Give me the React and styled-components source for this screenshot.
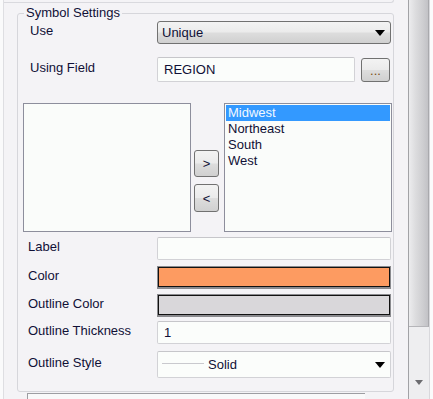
import React from 'react';
import styled, { createGlobalStyle } from 'styled-components';

const GlobalStyle = createGlobalStyle`
  html, body {
    margin: 0;
    padding: 0;
    background: #f4f3f6;
  }
  body {
    font-family: "Liberation Sans", Arial, sans-serif;
    font-size: 13px;
    color: #101036;
  }
`;

const buttonFace = `linear-gradient(#f3f3f3 0%, #ebebeb 48%, #dddddd 52%, #d0d0d0 100%)`;

const Frame = styled.div`
  display: flex;
  width: 433px;
  height: 399px;
  overflow: hidden;
`;

const Main = styled.div`
  flex: 0 0 408px;
  display: flex;
  background: #fafafb;
`;

const Panel = styled.div`
  flex: 1;
  margin-left: 3px;
  border-left: 1px solid #dedee2;
  background: #f4f3f6;
  display: flex;
  flex-direction: column;
`;

const TopStub = styled.div`
  height: 2px;
  margin-right: 14px;
  border-bottom: 1px solid #d9d9de;
  border-right: 1px solid #d9d9de;
  border-bottom-right-radius: 3px;
`;

const GroupArea = styled.div`
  padding: 0 14px 0 13px;
`;

const Group = styled.fieldset`
  margin: 2px 0 0;
  padding: 0 0 13px;
  border: 1px solid #d6d6db;
  border-radius: 3px;
  min-width: 0;
`;

const Legend = styled.legend`
  margin-left: 6px;
  padding: 0 2px;
  line-height: 16px;
  font-size: 13px;
  color: #101036;
`;

const Row = styled.div`
  display: grid;
  grid-template-columns: 139px 234px;
  align-items: center;
  height: ${p => p.$h}px;
  margin-top: ${p => p.$gap || 0}px;
`;

const FieldLabel = styled.span`
  padding-left: ${p => p.$indent}px;
  margin-top: -4px;
  white-space: nowrap;
`;

const Select = styled.div`
  height: 100%;
  box-sizing: border-box;
  display: flex;
  align-items: center;
  justify-content: space-between;
  padding: 0 5px 0 4px;
  border: 1px solid #717171;
  border-radius: 3px;
  background: ${buttonFace};
`;

const Arrow = () => (
  <svg width="10" height="6" viewBox="0 0 10 6">
    <polygon points="0,0 10,0 5,6" fill="#000" />
  </svg>
);

const TextBox = styled.div`
  height: 100%;
  box-sizing: border-box;
  display: flex;
  align-items: center;
  padding-left: ${p => p.$pad || 6}px;
  background: #fbfdfb;
  border: 1px solid #d2d2d6;
  border-top-color: #c6c6ca;
  border-radius: 2px;
  flex: 1;
`;

const FieldPick = styled.div`
  display: flex;
  gap: 6px;
  height: 100%;
  margin-right: 1px;
`;

const SmallButton = styled.button`
  width: ${p => p.$w}px;
  height: ${p => p.$h}px;
  align-self: ${p => p.$align || 'center'};
  padding: 0;
  border: 1px solid #717171;
  border-radius: 3px;
  background: ${buttonFace};
  font-family: inherit;
  font-size: 13px;
  color: ${p => p.$ink || '#101036'};
  line-height: 1;
`;

const ListRow = styled.div`
  display: flex;
  height: 129px;
  margin-top: 21px;
  padding-left: 5px;
`;

const ListBox = styled.div`
  width: 168px;
  box-sizing: border-box;
  background: #fafcfa;
  border: 1px solid #8d8e9c;
  padding: 1px;
`;

const ListItem = styled.div`
  height: 16px;
  line-height: 16px;
  padding-left: 2px;
  background: ${p => (p.$selected ? '#3399ff' : 'transparent')};
  color: ${p => (p.$selected ? '#f2f8ff' : '#101036')};
`;

const MoveColumn = styled.div`
  display: flex;
  flex-direction: column;
  gap: 7px;
  margin: 47px 5px 0 3px;
`;

const Swatch = styled.div`
  height: 100%;
  box-sizing: border-box;
  border: 1px solid #8a8a8e;
  border-bottom-width: 2px;
  box-shadow: inset 0 0 0 1px #111;
  background: ${p => p.$color};
`;

const StyleBox = styled(TextBox)`
  justify-content: flex-start;
  padding: 0 5px 0 4px;
  flex: none;
`;

const LineSample = styled.span`
  width: 42px;
  height: 1px;
  background: #c9c9ce;
  margin: -2px 4px 0 0;
`;

const StyleName = styled.span`
  flex: 1;
`;

const BottomBox = styled.div`
  flex: 1;
  margin: 1px 0 0 23px;
  width: 337px;
  border-top: 1px solid #9d9da2;
  border-left: 1px solid #9d9da2;
  background: #f9f9fa;
`;

const Scrollbar = styled.div`
  flex: 0 0 25px;
  display: flex;
  background: #fbfbfb;
`;

const Track = styled.div`
  width: 20px;
  border-left: 1px solid #a2a2a6;
  border-right: 1px solid #d8d8dc;
  background: #eeeef0;
  display: flex;
  flex-direction: column;
`;

const Thumb = styled.div`
  height: 326px;
  border-bottom: 1px solid #b5b5b9;
  border-right: 1px solid #a9a9ad;
  background: linear-gradient(to right, #ececee 0%, #dcdcde 35%, #cfcfd2 70%, #c2c2c6 100%);
`;

const TrackRest = styled.div`
  flex: 1;
  display: flex;
  align-items: flex-end;
  justify-content: center;
  padding-bottom: 14px;
`;

const DownArrow = () => (
  <svg width="8" height="5" viewBox="0 0 8 5">
    <polygon points="0,0 8,0 4,5" fill="#6c6c70" />
  </svg>
);

const regions = ['Midwest', 'Northeast', 'South', 'West'];

export default function App() {
  return (
    <>
      <GlobalStyle />
      <Frame>
        <Main>
          <Panel>
            <TopStub />
            <GroupArea>
              <Group>
                <Legend>Symbol Settings</Legend>

                <Row $h={23}>
                  <FieldLabel $indent={12}>Use</FieldLabel>
                  <Select>
                    <span>Unique</span>
                    <Arrow />
                  </Select>
                </Row>

                <Row $h={25} $gap={13}>
                  <FieldLabel $indent={12}>Using Field</FieldLabel>
                  <FieldPick>
                    <TextBox $pad={6}>REGION</TextBox>
                    <SmallButton $w={29} $h={24} $align="flex-end" $ink="#7a4d12">...</SmallButton>
                  </FieldPick>
                </Row>

                <ListRow>
                  <ListBox />
                  <MoveColumn>
                    <SmallButton $w={25} $h={27}>&gt;</SmallButton>
                    <SmallButton $w={25} $h={28}>&lt;</SmallButton>
                  </MoveColumn>
                  <ListBox>
                    {regions.map((r, i) => (
                      <ListItem key={r} $selected={i === 0}>{r}</ListItem>
                    ))}
                  </ListBox>
                </ListRow>

                <Row $h={23} $gap={5}>
                  <FieldLabel $indent={10}>Label</FieldLabel>
                  <TextBox />
                </Row>

                <Row $h={23} $gap={6}>
                  <FieldLabel $indent={10}>Color</FieldLabel>
                  <Swatch $color="#fd9b61" />
                </Row>

                <Row $h={23} $gap={5}>
                  <FieldLabel $indent={10}>Outline Color</FieldLabel>
                  <Swatch $color="#d9d7da" />
                </Row>

                <Row $h={23} $gap={4}>
                  <FieldLabel $indent={10}>Outline Thickness</FieldLabel>
                  <TextBox>1</TextBox>
                </Row>

                <Row $h={27} $gap={7}>
                  <FieldLabel $indent={10}>Outline Style</FieldLabel>
                  <StyleBox>
                    <LineSample />
                    <StyleName>Solid</StyleName>
                    <Arrow />
                  </StyleBox>
                </Row>
              </Group>
            </GroupArea>
            <BottomBox />
          </Panel>
        </Main>
        <Scrollbar>
          <Track>
            <Thumb />
            <TrackRest>
              <DownArrow />
            </TrackRest>
          </Track>
        </Scrollbar>
      </Frame>
    </>
  );
}
